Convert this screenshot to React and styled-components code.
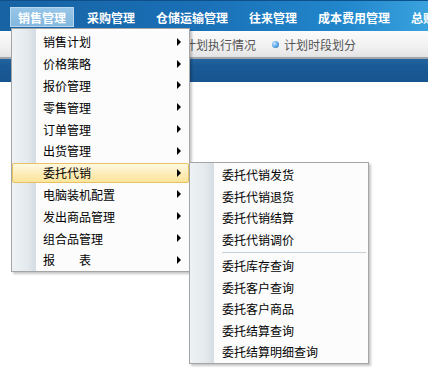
import React from "react";
import styled, { createGlobalStyle } from "styled-components";

const Global = createGlobalStyle`
  html, body { margin: 0; padding: 0; background: #ffffff; }
  body { font-family: "Noto Sans CJK SC", "Liberation Sans", sans-serif; font-size: 12px; }
`;

const Page = styled.div`
  position: relative;
  width: 428px;
  height: 382px;
  overflow: hidden;
  background: #fff;
`;

const NavBar = styled.div`
  height: 31px;
  box-sizing: border-box;
  border-top: 1px solid #0f4f8a;
  background: linear-gradient(to right, #1763a4 0%, #1a6fb5 45%, #2186cb 80%, #3aa2de 100%);
  display: flex;
  align-items: flex-start;
  padding: 6px 0 0 10px;
  gap: 5px;
  white-space: nowrap;
`;

const NavItem = styled.div`
  height: 20px;
  box-sizing: border-box;
  padding: 0 7px;
  display: flex;
  align-items: center;
  color: #ffffff;
  font-weight: 700;
  font-size: 12px;
  letter-spacing: 0;
  border: 1px solid ${(p) => (p.$active ? "#b8d7ee" : "transparent")};
  background: ${(p) => (p.$active ? "linear-gradient(#98c6e8, #83b7de)" : "transparent")};
`;

const SubBar = styled.div`
  height: 28px;
  box-sizing: border-box;
  background: linear-gradient(#fbfbfb, #f1f1f1 60%, #e4e4e4);
  border-bottom: 2px solid #9ea5ad;
  display: flex;
  align-items: center;
  padding-left: 172px;
  gap: 16px;
  white-space: nowrap;
`;

const SubLink = styled.div`
  display: flex;
  align-items: center;
  gap: 5px;
  color: #555;
  font-size: 12px;
`;

const Dot = styled.span`
  width: 7px;
  height: 7px;
  border-radius: 50%;
  background: radial-gradient(circle at 35% 35%, #c9e6ff 0%, #5fa8e6 50%, #2f73b8 100%);
`;

const Band = styled.div`
  height: 23px;
  background: linear-gradient(#2465a0, #1a5a96 30%, #17558f);
`;

const Menu = styled.div`
  position: absolute;
  left: ${(p) => p.$left}px;
  top: ${(p) => p.$top}px;
  width: ${(p) => p.$width}px;
  box-sizing: border-box;
  border: 1px solid #a5a5a5;
  padding: ${(p) => p.$pad};
  background:
    linear-gradient(to right, #eef2f5 0px, #e3e9ed 16px, #d4dce2 24px, #fcfcfc 24px, #fcfcfc 100%);
  box-shadow: 2px 2px 2px rgba(0, 0, 0, 0.22);
`;

const Item = styled.div`
  position: relative;
  height: ${(p) => p.$h}px;
  display: flex;
  align-items: center;
  padding-left: ${(p) => p.$indent}px;
  color: #000;
  font-size: 12px;
  white-space: pre;
  &::before {
    content: "";
    display: ${(p) => (p.$active ? "block" : "none")};
    position: absolute;
    left: 0;
    right: 0;
    top: 1px;
    bottom: 1px;
    border: 1px solid #e6c261;
    border-radius: 2px;
    background: linear-gradient(#fff9e3, #fdebb3 60%, #fce49c);
  }
`;

const ItemText = styled.span`
  position: relative;
  flex: 1;
`;

const Arrow = styled.span`
  position: relative;
  width: 0;
  height: 0;
  margin-right: 8px;
  border-left: 4px solid #000;
  border-top: 4px solid transparent;
  border-bottom: 4px solid transparent;
`;

const Separator = styled.div`
  height: 5px;
  margin-left: 32px;
  margin-right: 2px;
  display: flex;
  align-items: center;
  &::after {
    content: "";
    flex: 1;
    height: 1px;
    background: #c8d0d7;
  }
`;

const navItems = ["销售管理", "采购管理", "仓储运输管理", "往来管理", "成本费用管理", "总账管理"];
const mainItems = [
  "销售计划",
  "价格策略",
  "报价管理",
  "零售管理",
  "订单管理",
  "出货管理",
  "委托代销",
  "电脑装机配置",
  "发出商品管理",
  "组合品管理",
  "报　　表",
];
const subA = ["委托代销发货", "委托代销退货", "委托代销结算", "委托代销调价"];
const subB = ["委托库存查询", "委托客户查询", "委托客户商品", "委托结算查询", "委托结算明细查询"];

export default function App() {
  return (
    <Page>
      <Global />
      <NavBar>
        {navItems.map((n, i) => (
          <NavItem key={n} $active={i === 0}>
            {n}
          </NavItem>
        ))}
      </NavBar>
      <SubBar>
        <SubLink>
          <Dot />
          计划执行情况
        </SubLink>
        <SubLink>
          <Dot />
          计划时段划分
        </SubLink>
      </SubBar>
      <Band />

      <Menu $left={11} $top={28} $width={179} $pad="2px 0 0 0">
        {mainItems.map((m, i) => (
          <Item key={m} $h={21.8} $indent={31} $active={i === 6}>
            <ItemText>{m}</ItemText>
            <Arrow />
          </Item>
        ))}
      </Menu>

      <Menu $left={189} $top={162} $width={180} $pad="1px 0 0 0">
        {subA.map((m) => (
          <Item key={m} $h={21.5} $indent={32}>
            <ItemText>{m}</ItemText>
          </Item>
        ))}
        <Separator />
        {subB.map((m) => (
          <Item key={m} $h={21.5} $indent={32}>
            <ItemText>{m}</ItemText>
          </Item>
        ))}
      </Menu>
    </Page>
  );
}
